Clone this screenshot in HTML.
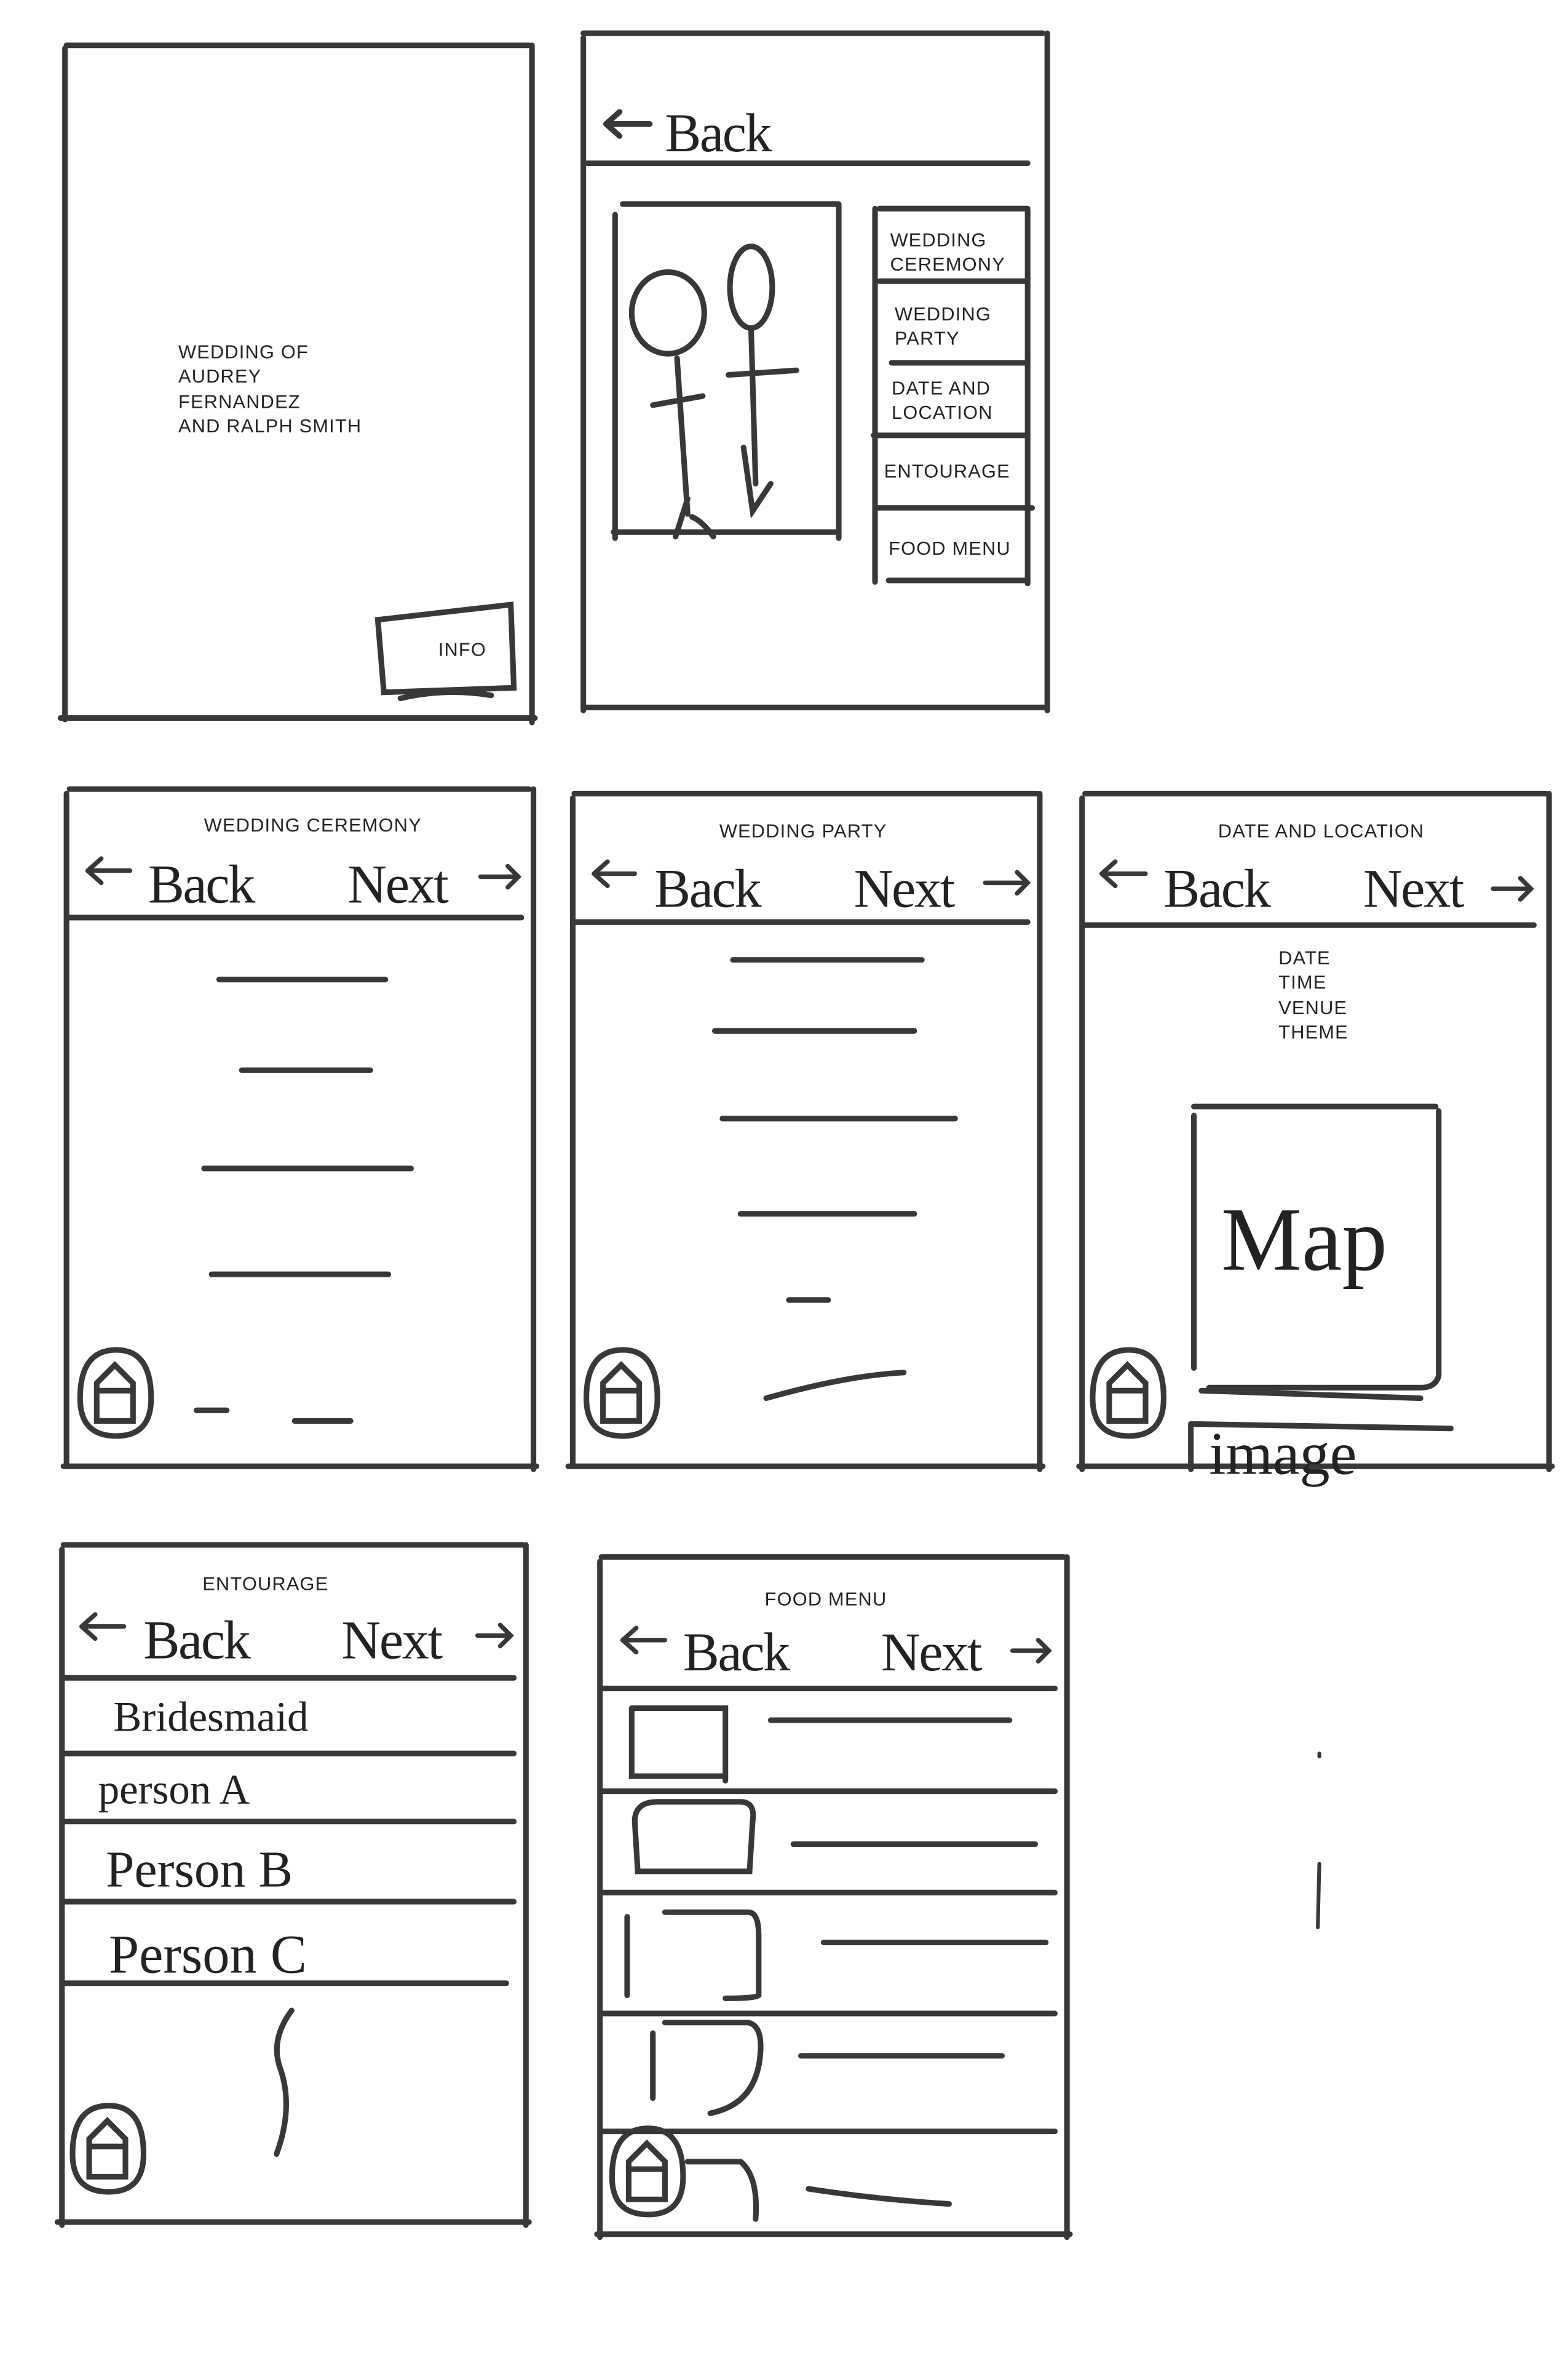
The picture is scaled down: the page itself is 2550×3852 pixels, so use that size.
<!DOCTYPE html>
<html><head><meta charset="utf-8"><style>
html,body{margin:0;padding:0;background:#fff;}
svg{display:block;}
text{font-family:"Liberation Sans",sans-serif;fill:#222;}
.s{font-size:12.5px;letter-spacing:0.5px;}
.h{font-size:36px;font-family:"Liberation Serif",serif;letter-spacing:-1px;}
</style></head><body>
<svg width="2550" height="3852" viewBox="0 0 1050 1586" preserveAspectRatio="none" xmlns="http://www.w3.org/2000/svg">
<g transform="scale(1.012)">
<g stroke="#383838" stroke-width="3.7" fill="none" stroke-linecap="round">
<path d="M43 32 V476 M352 30 V478 M44 30 H350 M40 475 H354"/>
<path d="M250 410 L338 400 L340 455 L254 458 Z M265 462 Q295 455 325 460"/>
<path d="M386 25 V470 M693 22 V470 M386 22 H690 M386 468 H693 M386 108 H680"/>
<path d="M401 82 H430 M401 82 L410 74 M401 82 L410 90"/>
<path d="M407 142 V356 M555 135 V356 M412 135 H555 M406 352 H555"/>
<path d="M579 138 V385 M680 138 V386 M582 138 H680 M582 186 H680 M590 240 H680 M578 288 H680 M580 336 H683 M588 384 H680"/>
<ellipse cx="442" cy="207" rx="24" ry="27"/>
<ellipse cx="497" cy="190" rx="14" ry="27"/>
<path d="M448 237 L455 340 M432 268 L465 262 M497 217 L500 320 M482 248 L527 245 M492 296 L498 338 L510 320 M455 330 L447 355 M458 342 Q465 345 472 355"/>
<path d="M44 525 V970 M353 522 V972 M46 522 H350 M42 970 H355 M45 607 H345"/>
<path d="M145 648 H255 M160 708 H245 M135 773 H272 M140 843 H257 M195 940 H232 M130 933 H150"/>
<path d="M379 528 V970 M688 525 V972 M380 525 H686 M376 970 H690 M380 610 H680"/>
<path d="M485 635 H610 M473 682 H605 M478 740 H632 M490 803 H605 M522 860 H548 M507 925 Q560 910 598 908"/>
<path d="M716 528 V972 M1025 525 V972 M718 525 H1023 M714 970 H1027 M716 612 H1015"/>
<path d="M790 732 H950 M790 738 V905 M952 735 V910 Q950 918 940 918 H800"/>
<path d="M795 920 L940 925 M788 942 V972 M788 942 L960 945"/>
<path d="M41 1025 V1472 M348 1022 V1472 M42 1022 H346 M38 1470 H350 M41 1110 H340 M41 1160 H340 M41 1205 H340 M41 1258 H340 M41 1312 H335"/>
<path d="M193 1330 Q178 1350 186 1370 Q194 1395 183 1425"/>
<path d="M397 1033 V1480 M706 1030 V1480 M398 1030 H704 M395 1478 H708 M397 1117 H698 M397 1185 H698 M397 1252 H698 M397 1332 H698 M397 1410 H698"/>
<path d="M418 1130 H480 V1178 M418 1130 V1175 H478 M420 1205 Q420 1192 435 1192 H490 Q500 1192 498 1205 L496 1238 H422 Z M415 1268 V1320 M440 1265 H495 Q502 1265 502 1280 V1320 Q500 1322 480 1322 M432 1345 V1388 M440 1338 H495 Q505 1340 503 1360 Q500 1392 470 1398 M455 1430 H490 Q502 1440 500 1468"/>
<path d="M510 1138 H668 M525 1220 H685 M545 1285 H692 M530 1360 H663 M535 1448 Q580 1455 628 1458"/>
<path d="M873 1233 L872 1275 M873 1160 V1162" stroke-width="2.5"/>
<g id="home">
<path d="M77 893 Q100 893 100 925 Q100 950 77 950 Q53 950 53 925 Q53 893 77 893 Z"/>
<path d="M64 940 V915 L76 903 L88 915 V940 Z M64 920 H88"/>
</g>
<use href="#home" x="335" y="0"/>
<use href="#home" x="670" y="0"/>
<use href="#home" x="-5" y="500"/>
<use href="#home" x="352" y="515"/>
</g>
<g stroke="#383838" stroke-width="3" fill="none" stroke-linecap="round">
<path d="M58 576 H86 M58 576 L67 568 M58 576 L67 584 M318 580 H343 M336 573 L343 580 L336 587"/>
<path d="M393 578 H420 M393 578 L402 570 M393 578 L402 586 M652 584 H680 M673 577 L680 584 L673 591"/>
<path d="M729 578 H758 M729 578 L738 570 M729 578 L738 586 M988 588 H1013 M1006 581 L1013 588 L1006 595"/>
<path d="M54 1076 H82 M54 1076 L63 1068 M54 1076 L63 1084 M316 1082 H338 M331 1075 L338 1082 L331 1089"/>
<path d="M412 1085 H440 M412 1085 L421 1077 M412 1085 L421 1093 M670 1092 H694 M687 1085 L694 1092 L687 1099"/>
</g>
<g>
<text class="s" x="118" y="237">WEDDING OF</text>
<text class="s" x="118" y="253">AUDREY</text>
<text class="s" x="118" y="270">FERNANDEZ</text>
<text class="s" x="118" y="286">AND RALPH SMITH</text>
<text class="s" x="290" y="434">INFO</text>
<text class="h" x="440" y="100">Back</text>
<text class="s" x="589" y="163">WEDDING</text>
<text class="s" x="589" y="179">CEREMONY</text>
<text class="s" x="592" y="212">WEDDING</text>
<text class="s" x="592" y="228">PARTY</text>
<text class="s" x="590" y="261">DATE AND</text>
<text class="s" x="590" y="277">LOCATION</text>
<text class="s" x="585" y="316">ENTOURAGE</text>
<text class="s" x="588" y="367">FOOD MENU</text>
<text class="s" x="135" y="550">WEDDING CEREMONY</text>
<text class="h" x="98" y="597">Back</text>
<text class="h" x="230" y="597">Next</text>
<text class="s" x="476" y="554">WEDDING PARTY</text>
<text class="h" x="433" y="600">Back</text>
<text class="h" x="565" y="600">Next</text>
<text class="s" x="806" y="554">DATE AND LOCATION</text>
<text class="h" x="770" y="600">Back</text>
<text class="h" x="902" y="600">Next</text>
<text class="s" x="846" y="638">DATE</text>
<text class="s" x="846" y="654">TIME</text>
<text class="s" x="846" y="671">VENUE</text>
<text class="s" x="846" y="687">THEME</text>
<text style="font-size:60px;font-family:'Liberation Serif',serif" x="808" y="840">Map</text>
<text style="font-size:40px;font-family:'Liberation Serif',serif" x="800" y="975">image</text>
<text class="s" x="134" y="1052">ENTOURAGE</text>
<text class="h" x="95" y="1097">Back</text>
<text class="h" x="226" y="1097">Next</text>
<text style="font-size:28px;font-family:'Liberation Serif',serif" x="75" y="1145">Bridesmaid</text>
<text style="font-size:28px;font-family:'Liberation Serif',serif" x="65" y="1193">person A</text>
<text style="font-size:34px;font-family:'Liberation Serif',serif" x="70" y="1248">Person B</text>
<text style="font-size:36px;font-family:'Liberation Serif',serif" x="72" y="1305">Person C</text>
<text class="s" x="506" y="1062">FOOD MENU</text>
<text class="h" x="452" y="1105">Back</text>
<text class="h" x="583" y="1105">Next</text>
</g>
</g>
</svg>
</body></html>
